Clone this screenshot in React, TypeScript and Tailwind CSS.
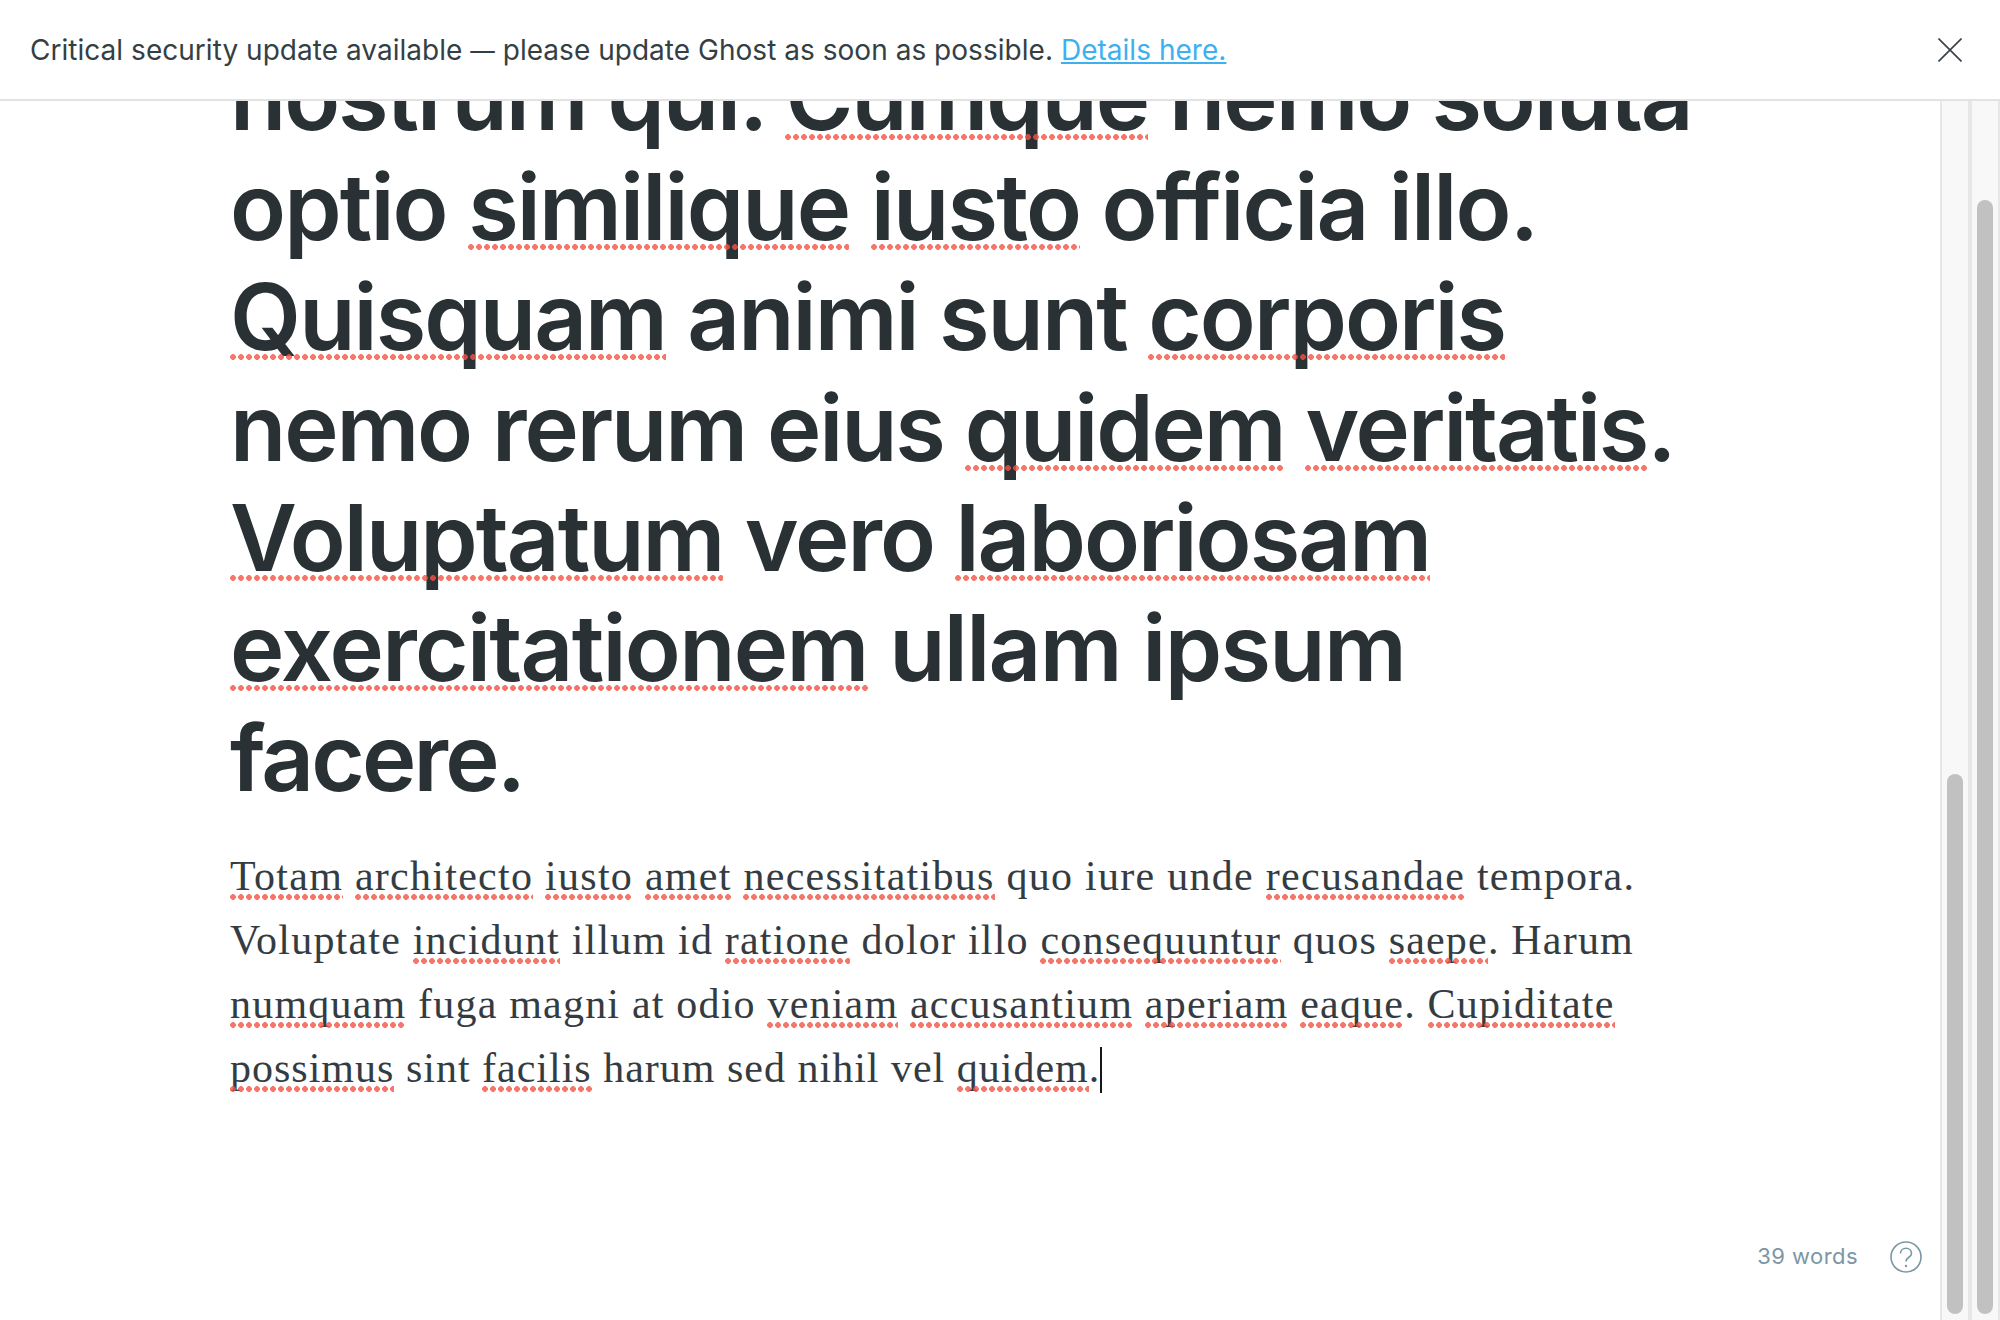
type Part = [string, boolean];

const headingLines: { parts: Part[]; tracking: string }[] = [
  { parts: [["nostrum qui. ", false], ["Cumque", true], [" nemo soluta", false]], tracking: "tracking-[-2.09px]" },
  { parts: [["optio ", false], ["similique", true], [" ", false], ["iusto", true], [" officia illo.", false]], tracking: "tracking-[-1.84px]" },
  { parts: [["Quisquam", true], [" animi sunt ", false], ["corporis", true]], tracking: "tracking-[-1.93px]" },
  { parts: [["nemo rerum eius ", false], ["quidem", true], [" ", false], ["veritatis", true], [".", false]], tracking: "tracking-[-2.14px]" },
  { parts: [["Voluptatum", true], [" vero ", false], ["laboriosam", true]], tracking: "tracking-[-1.94px]" },
  { parts: [["exercitationem", true], [" ullam ipsum", false]], tracking: "tracking-[-1.69px]" },
  { parts: [["facere.", false]], tracking: "tracking-[-2.84px]" },
];

const bodyLines: { parts: Part[]; tracking: string }[] = [
  { parts: [["Totam", true], [" ", false], ["architecto", true], [" ", false], ["iusto", true], [" ", false], ["amet", true], [" ", false], ["necessitatibus", true], [" quo iure unde ", false], ["recusandae", true], [" tempora.", false]], tracking: "tracking-[1.28px]" },
  { parts: [["Voluptate ", false], ["incidunt", true], [" illum id ", false], ["ratione", true], [" dolor illo ", false], ["consequuntur", true], [" quos ", false], ["saepe", true], [". Harum", false]], tracking: "tracking-[1.2px]" },
  { parts: [["numquam", true], [" fuga magni at odio ", false], ["veniam", true], [" ", false], ["accusantium", true], [" ", false], ["aperiam", true], [" ", false], ["eaque", true], [". ", false], ["Cupiditate", true]], tracking: "tracking-[1.2px]" },
  { parts: [["possimus", true], [" sint ", false], ["facilis", true], [" harum sed nihil vel ", false], ["quidem", true], [".", false]], tracking: "tracking-[1px]" },
];

function Line({ parts, tracking, dots, caret }: { parts: Part[]; tracking: string; dots: string; caret?: boolean }) {
  return (
    <div className={`whitespace-pre ${tracking}`}>
      {parts.map(([text, misspelled], i) =>
        misspelled ? (
          <span
            key={i}
            className={`relative after:content-[''] after:absolute after:inset-x-0 after:h-[6px] after:opacity-80 after:bg-[radial-gradient(circle,#f25446_2.6px,transparent_3.1px)] after:bg-[length:8px_6px] after:bg-[position:-1px_0] after:bg-repeat-x ${dots}`}
          >
            {text}
          </span>
        ) : (
          <span key={i}>{text}</span>
        )
      )}
      {caret && <span className="inline-block w-[2px] h-[46px] bg-[#15171a] align-[-11px]" />}
    </div>
  );
}

function ScrollTrack({ thumbTop }: { thumbTop: string }) {
  return (
    <div className="h-full bg-[#f8f8f8] border-x-2 border-[#e7e7e7] flex justify-center">
      <div className={`w-4 rounded-full bg-[#c1c1c1] mb-1.5 ${thumbTop}`} />
    </div>
  );
}

export default function App() {
  return (
    <div className="w-[2000px] h-[1320px] flex flex-col overflow-hidden bg-white">
      <header className="h-[101px] shrink-0 border-b-2 border-[#e2e2e2] flex items-center justify-between pl-[30px] pr-[38px] relative z-10 bg-white">
        <p className="font-['Inter',sans-serif] text-[28px] tracking-[0.03px] text-[#343f44]">
          Critical security update available <span className="text-[24.5px]">—</span> please update Ghost as soon as possible.{" "}
          <a href="#" className="underline text-[#3eb0ef]">Details here.</a>
        </p>
        <svg width="24" height="24" viewBox="0 0 24 24" fill="none" stroke="#394047" strokeWidth="1.6">
          <path d="M0.5 0.5 L23.5 23.5 M23.5 0.5 L0.5 23.5" />
        </svg>
      </header>

      <div className="flex-1 flex min-h-0">
        <main className="flex-1 relative overflow-hidden">
          <div className="pl-[230px] -mt-[59px]">
            <h1 className="font-['Inter',sans-serif] font-semibold text-[92px] leading-[110.2px] text-[#293135]">
              {headingLines.map((line, i) => (
                <Line key={i} parts={line.parts} tracking={line.tracking} dots="after:bottom-[12px]" />
              ))}
            </h1>
            <div className="mt-[31px] font-['Liberation_Serif',serif] text-[42px] leading-[64px] text-[#343c42]">
              {bodyLines.map((line, i) => (
                <Line key={i} parts={line.parts} tracking={line.tracking} dots="after:-bottom-px" caret={i === bodyLines.length - 1} />
              ))}
            </div>
          </div>

          <div className="absolute right-[18px] bottom-[47px] flex items-center gap-[32px]">
            <span className="font-['Inter',sans-serif] text-[22px] tracking-[0.02em] text-[#7d96a5]">39 words</span>
            <svg width="32" height="32" viewBox="0 0 32 32" fill="none" stroke="#7d96a5" strokeWidth="1.6">
              <circle cx="16" cy="16" r="15" />
              <path d="M10.5 12.5 C10.5 5.5 21.5 5.5 21.5 12.5 C21.5 16.5 16 16 16 20.5" />
              <circle cx="16" cy="25" r="1.2" fill="#7d96a5" stroke="none" />
            </svg>
          </div>
        </main>

        <div className="w-[30px] shrink-0">
          <ScrollTrack thumbTop="mt-[673px]" />
        </div>
        <div className="w-[30px] shrink-0">
          <ScrollTrack thumbTop="mt-[99px]" />
        </div>
      </div>
    </div>
  );
}
